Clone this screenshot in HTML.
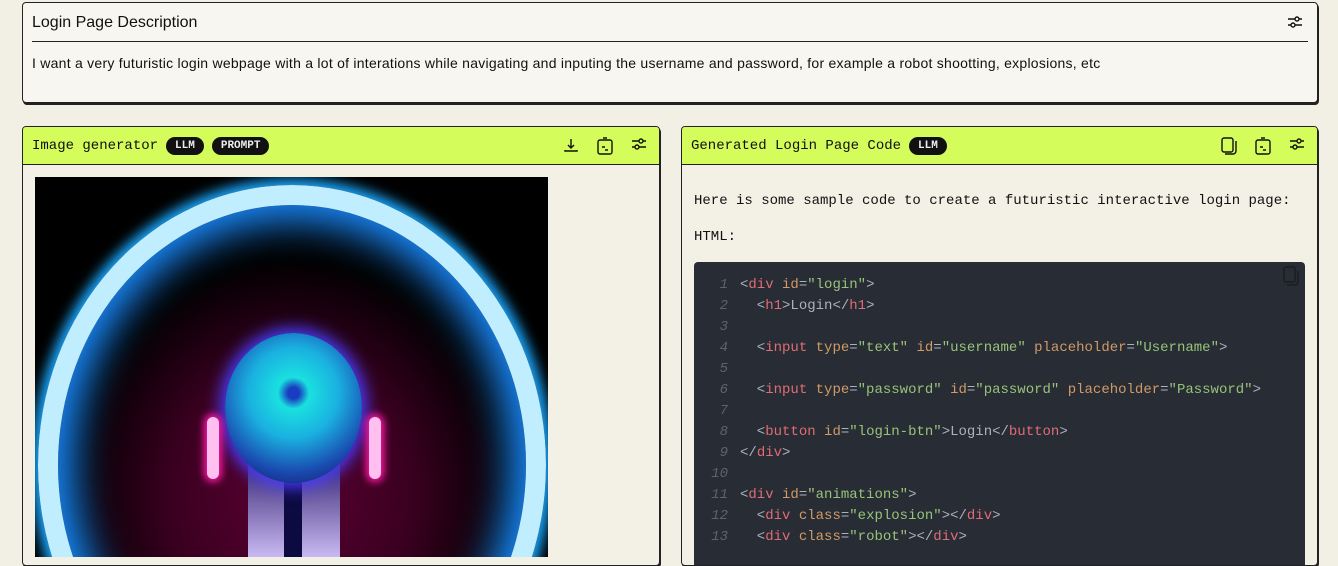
<!DOCTYPE html>
<html><head><style>
*{box-sizing:border-box;margin:0;padding:0}
body{width:1338px;height:549px;overflow:hidden;background:#f2efe4;font-family:"Liberation Sans",sans-serif;color:#111;position:relative}
.card{position:absolute;border:1px solid #222;border-radius:4px;box-shadow:1px 2px 0 #222;background:#f3f0e6;overflow:hidden}
.top{left:22px;top:2px;width:1296px;height:101px;background:#f8f6f0}
.top h1{font-size:16px;font-weight:normal;position:absolute;left:9px;top:11px}
.top .line{position:absolute;left:9px;right:9px;top:38px;border-top:1px solid #222}
.top p{position:absolute;left:9px;top:52px;font-size:14px;letter-spacing:0.25px;white-space:nowrap}
.hdr{height:38px;background:#d4fc5a;border-bottom:1px solid #222;display:flex;align-items:center;padding-left:9px;font-family:"Liberation Mono",monospace;font-size:14px;position:relative}
.tag{background:#111;color:#eee;font-size:11px;border-radius:10px;padding:3px 9px;margin-left:8px;font-weight:bold}
.icons{position:absolute;right:12px;top:10px;display:flex;gap:18px}
.mono{font-family:"Liberation Mono",monospace;font-size:14px}
.code{position:absolute;left:12px;top:135px;width:611px;height:320px;background:#282c34;border-radius:4px;font-family:"Liberation Mono",monospace;font-size:14px;color:#abb2bf}
.ln{position:absolute;left:0;width:34px;text-align:right;color:#5c6370;font-style:italic}
.cl{position:absolute;left:46px;white-space:pre}
.t{color:#e06c75}.a{color:#d19a66}.s{color:#98c379}
</style></head><body>
<div class="card top"><h1>Login Page Description</h1><div class="line"></div>
<p>I want a very futuristic login webpage with a lot of interations while navigating and inputing the username and password, for example a robot shootting, explosions, etc</p>
<svg style="position:absolute;right:14px;top:12px" width="16" height="14" viewBox="0 0 16 14" fill="none" stroke="#111" stroke-width="1.4"><path d="M1 4h14M1 10h14"/><circle cx="10" cy="4" r="2" fill="#f8f6f0"/><circle cx="6" cy="10" r="2" fill="#f8f6f0"/></svg>
</div>

<div class="card" style="left:22px;top:126px;width:638px;height:440px">
<div class="hdr">Image generator<span class="tag">LLM</span><span class="tag">PROMPT</span>
<div class="icons">
<svg width="16" height="16" viewBox="0 0 16 16" fill="none" stroke="#111" stroke-width="1.4"><path d="M8 2v9M5 8l3 3 3-3M2 13v1h12v-1"/></svg>
<svg width="16" height="18" viewBox="0 0 16 18" fill="none" stroke="#111" stroke-width="1.4"><rect x="1" y="3" width="14" height="14" rx="2"/><path d="M6 1h4M5 10h3M8 13h3"/></svg>
<svg width="16" height="14" viewBox="0 0 16 14" fill="none" stroke="#111" stroke-width="1.4"><path d="M1 4h14M1 10h14"/><circle cx="10" cy="4" r="2" fill="#d4fc5a"/><circle cx="6" cy="10" r="2" fill="#d4fc5a"/></svg>
</div></div>
<div style="position:absolute;left:12px;top:50px;width:513px;height:380px;background:#000;overflow:hidden">
<div style="position:absolute;left:0;top:0;width:513px;height:380px;background:radial-gradient(ellipse 220px 240px at 256px 320px,#5a0032 0%,#3a0020 55%,#000 100%)"></div>
<div style="position:absolute;left:3px;top:8px;width:508px;height:560px;border-radius:50%;border:20px solid #c0eeff;box-shadow:0 0 12px 6px #1aa8ff,inset 0 0 40px 16px #1a8cff"></div>
<div style="position:absolute;left:213px;top:270px;width:92px;height:120px;background:linear-gradient(#201060,#d8c8ff);border-radius:20px 20px 0 0"></div>
<div style="position:absolute;left:249px;top:280px;width:18px;height:110px;background:#0c0a40"></div>
<div style="position:absolute;left:190px;top:156px;width:137px;height:150px;border-radius:50%;background:radial-gradient(circle at 50% 40%,#1a3cc0 0 5%,#1ae0e0 14%,#1ab0e0 40%,#1a4ab0 70%,#120c50 100%);box-shadow:0 0 16px 5px #4a3cff"></div>
<div style="position:absolute;left:172px;top:240px;width:12px;height:62px;border-radius:6px;background:#ffc0f0;box-shadow:0 0 8px 3px #ff1aa8"></div>
<div style="position:absolute;left:334px;top:240px;width:12px;height:62px;border-radius:6px;background:#ffc0f0;box-shadow:0 0 8px 3px #ff1aa8"></div>
</div>
</div>

<div class="card" style="left:681px;top:126px;width:637px;height:440px">
<div class="hdr">Generated Login Page Code<span class="tag">LLM</span>
<div class="icons">
<svg width="16" height="18" viewBox="0 0 16 18" fill="none" stroke="#111" stroke-width="1.4"><rect x="1" y="1" width="11" height="14" rx="2"/><path d="M4 17h8a3 3 0 0 0 3-3V4"/></svg>
<svg width="16" height="18" viewBox="0 0 16 18" fill="none" stroke="#111" stroke-width="1.4"><rect x="1" y="3" width="14" height="14" rx="2"/><path d="M6 1h4M5 10h3M8 13h3"/></svg>
<svg width="16" height="14" viewBox="0 0 16 14" fill="none" stroke="#111" stroke-width="1.4"><path d="M1 4h14M1 10h14"/><circle cx="10" cy="4" r="2" fill="#d4fc5a"/><circle cx="6" cy="10" r="2" fill="#d4fc5a"/></svg>
</div></div>
<div class="mono" style="position:absolute;left:12px;top:66px">Here is some sample code to create a futuristic interactive login page:</div>
<div class="mono" style="position:absolute;left:12px;top:102px">HTML:</div>
<div class="code">
<svg style="position:absolute;right:6px;top:4px" width="16" height="20" viewBox="0 0 16 20" fill="none" stroke="#1a1d22" stroke-width="1.5"><rect x="1" y="1" width="11" height="15" rx="2"/><path d="M4 19h8a3 3 0 0 0 3-3V5"/></svg>
<div class="ln" style="top:15px">1</div><div class="cl" style="top:15px">&lt;<span class="t">div</span> <span class="a">id</span>=<span class="s">"login"</span>&gt;</div>
<div class="ln" style="top:36px">2</div><div class="cl" style="top:36px">  &lt;<span class="t">h1</span>&gt;Login&lt;/<span class="t">h1</span>&gt;</div>
<div class="ln" style="top:57px">3</div>
<div class="ln" style="top:78px">4</div><div class="cl" style="top:78px">  &lt;<span class="t">input</span> <span class="a">type</span>=<span class="s">"text"</span> <span class="a">id</span>=<span class="s">"username"</span> <span class="a">placeholder</span>=<span class="s">"Username"</span>&gt;</div>
<div class="ln" style="top:99px">5</div>
<div class="ln" style="top:120px">6</div><div class="cl" style="top:120px">  &lt;<span class="t">input</span> <span class="a">type</span>=<span class="s">"password"</span> <span class="a">id</span>=<span class="s">"password"</span> <span class="a">placeholder</span>=<span class="s">"Password"</span>&gt;</div>
<div class="ln" style="top:141px">7</div>
<div class="ln" style="top:162px">8</div><div class="cl" style="top:162px">  &lt;<span class="t">button</span> <span class="a">id</span>=<span class="s">"login-btn"</span>&gt;Login&lt;/<span class="t">button</span>&gt;</div>
<div class="ln" style="top:183px">9</div><div class="cl" style="top:183px">&lt;/<span class="t">div</span>&gt;</div>
<div class="ln" style="top:204px">10</div>
<div class="ln" style="top:225px">11</div><div class="cl" style="top:225px">&lt;<span class="t">div</span> <span class="a">id</span>=<span class="s">"animations"</span>&gt;</div>
<div class="ln" style="top:246px">12</div><div class="cl" style="top:246px">  &lt;<span class="t">div</span> <span class="a">class</span>=<span class="s">"explosion"</span>&gt;&lt;/<span class="t">div</span>&gt;</div>
<div class="ln" style="top:267px">13</div><div class="cl" style="top:267px">  &lt;<span class="t">div</span> <span class="a">class</span>=<span class="s">"robot"</span>&gt;&lt;/<span class="t">div</span>&gt;</div>
</div>
</div>
</body></html>
